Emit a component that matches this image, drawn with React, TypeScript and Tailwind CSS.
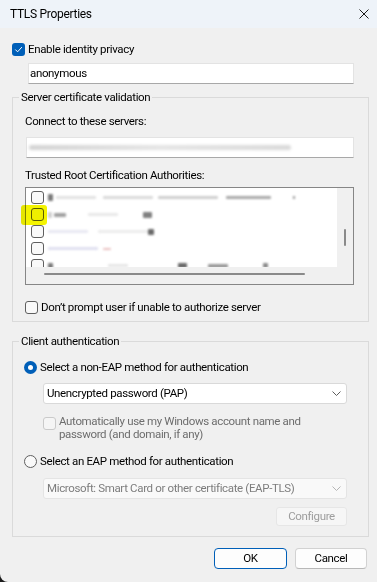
import React from 'react';

type Smudge = [number, number, string, number];

const rows: Smudge[][] = [
  [[0, 5, '#7a7a7a', 7], [8, 40, '#e2e2e2', 3], [55, 50, '#dadada', 3], [110, 60, '#cfcfcf', 3], [178, 45, '#a9a9a9', 3], [245, 2, '#8a8a8a', 3]],
  [[0, 4, '#cfcfcf', 6], [6, 12, '#a0a0a0', 4], [40, 30, '#e8e8e8', 3], [95, 9, '#808080', 6]],
  [[0, 40, '#e8e8f2', 3], [50, 50, '#ececec', 3], [100, 6, '#6a6a6a', 6]],
  [[0, 50, '#e0e0f0', 3], [55, 8, '#eac0c0', 2]],
  [[0, 5, '#7a7a7a', 6], [60, 20, '#e6e6e6', 3], [130, 9, '#6a6a6a', 5], [160, 20, '#9a9a9a', 4], [215, 5, '#8a8a8a', 5]],
];

const Check: React.FC<{ checked?: boolean; disabled?: boolean }> = ({ checked, disabled }) => {
  if (checked) {
    return (
      <span className="w-[13px] h-[13px] rounded-[3px] bg-[#005fb8] flex items-center justify-center shrink-0">
        <svg width="9" height="9" viewBox="0 0 9 9" fill="none">
          <path d="M1.6 4.8 L3.6 6.8 L7.6 2.4" stroke="#ffffff" strokeWidth="1" strokeLinecap="round" strokeLinejoin="round" />
        </svg>
      </span>
    );
  }
  return (
    <span
      className={
        disabled
          ? 'block w-[13px] h-[13px] rounded-[3px] border border-[#cacaca] bg-[#f5f5f5] shrink-0'
          : 'block w-[13px] h-[13px] rounded-[3px] border border-[#5f5f5f] bg-[#f9f9f9] shrink-0'
      }
    />
  );
};

const Radio: React.FC<{ checked?: boolean }> = ({ checked }) =>
  checked ? (
    <span className="w-[13px] h-[13px] rounded-full bg-[#005fb8] flex items-center justify-center shrink-0">
      <span className="w-[5px] h-[5px] rounded-full bg-white" />
    </span>
  ) : (
    <span className="block w-[13px] h-[13px] rounded-full border border-[#5f5f5f] bg-[#f9f9f9] shrink-0" />
  );

const Chevron: React.FC<{ color: string }> = ({ color }) => (
  <svg width="9" height="5" viewBox="0 0 9 5" fill="none">
    <path d="M0.5 0.5 L4.5 4.5 L8.5 0.5" stroke={color} strokeWidth="1" />
  </svg>
);

export default function App() {
  return (
    <div className="w-[377px] h-[582px] bg-[#1c1c1c] font-[family-name:Roboto,sans-serif] text-[11.5px] tracking-[-0.35px] leading-[15px] text-black">
      <div className="w-full h-full bg-[#f0f0f0] rounded-bl-[8px] flex flex-col overflow-hidden">
        {/* title bar */}
        <div className="h-[28px] bg-[#eef3f9] flex items-center justify-between pl-[10px] pr-[8px] shrink-0">
          <span className="text-[12px] tracking-[-0.3px]">TTLS Properties</span>
          <svg width="10" height="10" viewBox="0 0 10 10" fill="none">
            <path d="M0.5 0.5 L9.5 9.5 M9.5 0.5 L0.5 9.5" stroke="#1a1a1a" strokeWidth="1" />
          </svg>
        </div>

        <div className="flex flex-col pl-[12px]">
          <div className="mt-[15px] h-[13px] flex items-center gap-[3px]">
            <Check checked />
            <span>Enable identity privacy</span>
          </div>
          <div className="mt-[7px] ml-[16px] w-[326px] h-[21px] bg-white border border-[#e3e3e3] border-b-[#a8a8a8] flex items-center pl-[1px]">
            anonymous
          </div>

          {/* Server certificate validation */}
          <fieldset className="mt-[6px] w-[357px] border border-[#dadada]">
            <legend className="ml-[6px] px-[2px]">Server certificate validation</legend>
            <div className="pl-[12px] flex flex-col">
              <span className="mt-[9px]">Connect to these servers:</span>
              <div className="mt-[8px] ml-[1px] w-[328px] h-[21px] bg-white border border-[#e3e3e3] border-b-[#a8a8a8] flex items-center pl-[2px]">
                <div className="w-[262px] h-[5px] rounded-full bg-gradient-to-r from-[#d2d2d2] via-[#e4e4e4] to-[#d8d8d8] blur-[1.5px]" />
              </div>
              <span className="mt-[10px]">Trusted Root Certification Authorities:</span>

              <div className="relative mt-[4px] w-[329px] h-[98px] border border-[#868686] bg-[#f0f0f0] flex flex-col">
                <div className="flex h-[79px]">
                  <div className="w-[311px] h-[79px] bg-white overflow-hidden pl-[5px] pt-[1px] flex flex-col">
                    {rows.map((segs, i) => (
                      <div key={i} className="h-[17px] shrink-0 flex items-center gap-[4px]">
                        <Check />
                        <div className="relative h-[10px] w-[260px] blur-[0.8px]">
                          {segs.map(([x, w, c, h], j) => (
                            <span
                              key={j}
                              className="absolute rounded-[1px]"
                              style={{ left: x, width: w, height: h, top: 5 - h / 2, background: c }}
                            />
                          ))}
                        </div>
                      </div>
                    ))}
                  </div>
                  <div className="flex-1 pt-[41px] pl-[7px]">
                    <div className="w-[2px] h-[17px] bg-[#8a8a8a] rounded-full" />
                  </div>
                </div>
                <div className="pt-[6px] pl-[18px]">
                  <div className="w-[261px] h-[2px] bg-[#8a8a8a] rounded-full" />
                </div>
                <div className="absolute left-[-5px] top-[17px] w-[26px] h-[20px] rounded-[3px] bg-[#f4f400] mix-blend-multiply" />
              </div>

              <div className="mt-[16px] h-[13px] flex items-center gap-[3px]">
                <Check />
                <span>Don’t prompt user if unable to authorize server</span>
              </div>
              <div className="h-[7px]" />
            </div>
          </fieldset>

          {/* Client authentication */}
          <fieldset className="mt-[12px] w-[357px] border border-[#dadada]">
            <legend className="ml-[6px] px-[2px]">Client authentication</legend>
            <div className="pl-[11px] flex flex-col">
              <div className="mt-[12px] h-[13px] flex items-center gap-[3px]">
                <Radio checked />
                <span>Select a non-EAP method for authentication</span>
              </div>
              <div className="mt-[9px] ml-[19px] w-[304px] h-[21px] bg-white border border-[#d9d9d9] rounded-[3px] flex items-center justify-between pl-[3px] pr-[5px]">
                <span>Unencrypted password (PAP)</span>
                <Chevron color="#5d5d5d" />
              </div>
              <div className="mt-[11px] ml-[19px] flex items-start gap-[3px]">
                <span className="mt-[2px]">
                  <Check disabled />
                </span>
                <div className="flex flex-col text-[#6d6d6d]">
                  <span className="leading-[13px]">Automatically use my Windows account name and</span>
                  <span className="leading-[13px]">password (and domain, if any)</span>
                </div>
              </div>
              <div className="mt-[14px] h-[13px] flex items-center gap-[3px]">
                <Radio />
                <span>Select an EAP method for authentication</span>
              </div>
              <div className="mt-[10px] ml-[19px] w-[304px] h-[21px] bg-[#f9f9f9] border border-[#e4e4e4] rounded-[3px] flex items-center justify-between pl-[3px] pr-[5px] text-[#7d7d7d]">
                <span>Microsoft: Smart Card or other certificate (EAP-TLS)</span>
                <Chevron color="#b5b5b5" />
              </div>
              <div className="mt-[8px] ml-[19px] w-[304px] flex justify-end">
                <div className="w-[71px] h-[19px] bg-[#f6f6f6] border border-[#e6e6e6] rounded-[3px] flex items-center justify-center text-[#9d9d9d]">
                  Configure
                </div>
              </div>
              <div className="h-[10px]" />
            </div>
          </fieldset>

          <div className="mt-[11px] pr-[10px] flex justify-end gap-[8px]">
            <button className="w-[73px] h-[21px] bg-[#fdfdfd] border border-[#005fb8] rounded-[4px] flex items-center justify-center">
              OK
            </button>
            <button className="w-[72px] h-[21px] bg-[#fdfdfd] border border-[#d2d2d2] border-b-[#b8b8b8] rounded-[4px] flex items-center justify-center">
              Cancel
            </button>
          </div>
        </div>
      </div>
    </div>
  );
}
